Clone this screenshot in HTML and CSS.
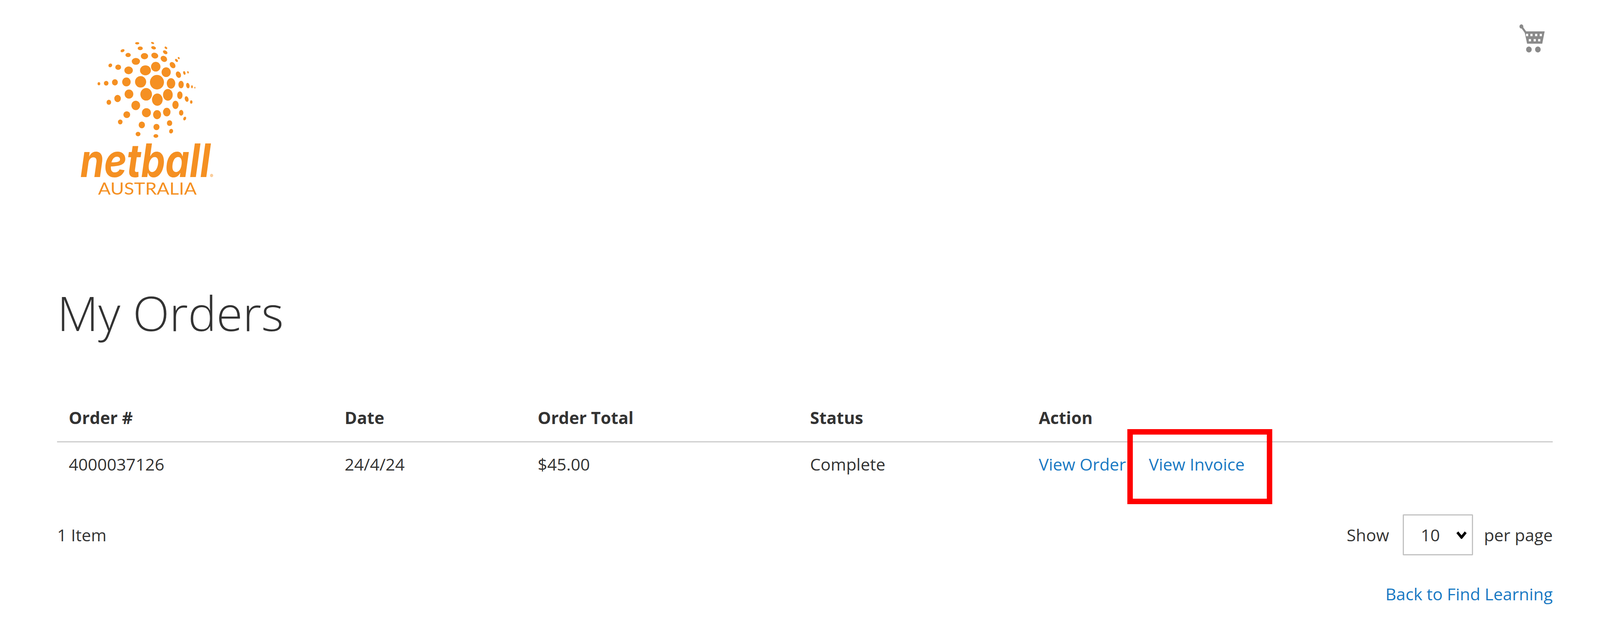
FILE: index.html
```html
<!DOCTYPE html>
<html lang="en">
<head>
  <meta charset="UTF-8">
  <title>My Orders</title>
  <link rel="stylesheet" href="styles.css">
</head>
<body>
<header class="site-header">
  <a class="logo" href="#">
    <svg class="logo-svg" viewBox="0 0 1500 1440" preserveAspectRatio="none" fill="#f59022">
      <ellipse cx="681" cy="152" rx="17" ry="9"/>
      <ellipse cx="808" cy="150" rx="13" ry="7" transform="rotate(20 808 150)"/>
      <ellipse cx="706" cy="191" rx="21" ry="14"/>
      <ellipse cx="816" cy="187" rx="20" ry="12" transform="rotate(15 816 187)"/>
      <ellipse cx="918" cy="187" rx="12" ry="8" transform="rotate(35 918 187)"/>
      <ellipse cx="560" cy="209" rx="17" ry="11" transform="rotate(-20 560 209)"/>
      <ellipse cx="912" cy="221" rx="20" ry="13" transform="rotate(30 912 221)"/>
      <ellipse cx="606" cy="242" rx="22" ry="16"/>
      <ellipse cx="741" cy="251" rx="30" ry="24"/>
      <ellipse cx="826" cy="247" rx="29" ry="22" transform="rotate(15 826 247)"/>
      <ellipse cx="901" cy="272" rx="28" ry="22" transform="rotate(30 901 272)"/>
      <ellipse cx="1005" cy="284" rx="14" ry="9" transform="rotate(45 1005 284)"/>
      <ellipse cx="1024" cy="266" rx="9" ry="7" transform="rotate(45 1024 266)"/>
      <ellipse cx="670" cy="291" rx="34" ry="26"/>
      <ellipse cx="973" cy="320" rx="27" ry="20" transform="rotate(45 973 320)"/>
      <ellipse cx="459" cy="322" rx="16" ry="14" transform="rotate(-30 459 322)"/>
      <ellipse cx="524" cy="336" rx="24" ry="20"/>
      <ellipse cx="610" cy="360" rx="35" ry="30"/>
      <ellipse cx="749" cy="360" rx="45" ry="38"/>
      <ellipse cx="834" cy="332" rx="39" ry="37"/>
      <ellipse cx="920" cy="374" rx="38" ry="37"/>
      <ellipse cx="1021" cy="393" rx="26" ry="20" transform="rotate(60 1021 393)"/>
      <ellipse cx="1070" cy="380" rx="14" ry="9" transform="rotate(70 1070 380)"/>
      <ellipse cx="1100" cy="375" rx="9" ry="6" transform="rotate(70 1100 375)"/>
      <ellipse cx="365" cy="463" rx="11" ry="12"/>
      <ellipse cx="425" cy="459" rx="19" ry="18"/>
      <ellipse cx="497" cy="452" rx="24" ry="24"/>
      <ellipse cx="592" cy="449" rx="35" ry="34"/>
      <ellipse cx="709" cy="448" rx="46" ry="44"/>
      <ellipse cx="844" cy="451" rx="58" ry="56"/>
      <ellipse cx="960" cy="460" rx="35" ry="40"/>
      <ellipse cx="1043" cy="469" rx="22" ry="29"/>
      <ellipse cx="1099" cy="477" rx="14" ry="21" transform="rotate(-15 1099 477)"/>
      <ellipse cx="1133" cy="486" rx="7" ry="11"/>
      <ellipse cx="1157" cy="493" rx="4" ry="7"/>
      <ellipse cx="613" cy="542" rx="36" ry="35"/>
      <ellipse cx="755" cy="544" rx="48" ry="48"/>
      <ellipse cx="847" cy="585" rx="44" ry="47"/>
      <ellipse cx="934" cy="548" rx="40" ry="45"/>
      <ellipse cx="1033" cy="551" rx="22" ry="30"/>
      <ellipse cx="1089" cy="580" rx="15" ry="22" transform="rotate(-20 1089 580)"/>
      <ellipse cx="1127" cy="603" rx="10" ry="13"/>
      <ellipse cx="519" cy="576" rx="27" ry="28"/>
      <ellipse cx="447" cy="605" rx="19" ry="19"/>
      <ellipse cx="669" cy="629" rx="36" ry="36"/>
      <ellipse cx="997" cy="625" rx="26" ry="32"/>
      <ellipse cx="595" cy="700" rx="28" ry="26"/>
      <ellipse cx="757" cy="685" rx="37" ry="35"/>
      <ellipse cx="845" cy="700" rx="33" ry="35"/>
      <ellipse cx="925" cy="680" rx="31" ry="33"/>
      <ellipse cx="1044" cy="686" rx="18" ry="22"/>
      <ellipse cx="1073" cy="730" rx="11" ry="15" transform="rotate(30 1073 730)"/>
      <ellipse cx="541" cy="756" rx="19" ry="19"/>
      <ellipse cx="719" cy="779" rx="26" ry="26"/>
      <ellipse cx="840" cy="795" rx="25" ry="24"/>
      <ellipse cx="948" cy="765" rx="22" ry="22"/>
      <ellipse cx="961" cy="827" rx="16" ry="18" transform="rotate(30 961 827)"/>
      <ellipse cx="688" cy="849" rx="20" ry="17"/>
      <ellipse cx="835" cy="864" rx="20" ry="14"/>
      <text class="logo-name" x="210" y="1178" textLength="1075" lengthAdjust="spacingAndGlyphs">netball</text>
      <circle cx="1295" cy="1167" r="13" opacity="0.45"/>
      <text class="logo-sub" x="358" y="1315" textLength="814" lengthAdjust="spacingAndGlyphs">AUSTRALIA</text>
    </svg>
  </a>
  <a class="cart" href="#">
    <svg viewBox="225 95 225 220" preserveAspectRatio="none" fill="#8a8a8a">
      <path d="M250 112 L285 158" stroke="#8a8a8a" stroke-width="16" fill="none"/>
      <circle cx="250" cy="112" r="16"/>
      <path d="M275 150 H442 L422 245 H297 Z"/>
      <g fill="#fff">
        <rect x="288" y="169" width="18" height="18"/>
        <rect x="324" y="169" width="18" height="18"/>
        <rect x="363" y="169" width="18" height="18"/>
        <rect x="401" y="169" width="18" height="18"/>
        <rect x="311" y="209" width="18" height="18"/>
        <rect x="351" y="209" width="18" height="18"/>
        <rect x="388" y="209" width="18" height="18"/>
      </g>
      <circle cx="312" cy="290" r="23"/>
      <circle cx="386" cy="290" r="23"/>
    </svg>
  </a>
</header>

<main class="content">
  <h1 class="page-title">My Orders</h1>

  <table class="orders">
    <colgroup>
      <col class="col-id">
      <col class="col-date">
      <col class="col-total">
      <col class="col-status">
      <col>
    </colgroup>
    <thead>
      <tr>
        <th>Order #</th>
        <th>Date</th>
        <th>Order Total</th>
        <th>Status</th>
        <th>Action</th>
      </tr>
    </thead>
    <tbody>
      <tr>
        <td>4000037126</td>
        <td>24/4/24</td>
        <td>$45.00</td>
        <td>Complete</td>
        <td class="actions">
          <a href="#">View Order</a>
          <a class="invoice" href="#">View Invoice<span class="highlight"></span></a>
        </td>
      </tr>
    </tbody>
  </table>

  <div class="toolbar">
    <span>1 Item</span>
    <div class="limiter">
      <span class="limit-show">Show</span>
      <select class="limit-select">
        <option>10</option>
        <option>20</option>
        <option>50</option>
      </select>
      <span>per page</span>
    </div>
  </div>

  <div class="back">
    <a href="#">Back to Find Learning</a>
  </div>
</main>
</body>
</html>
```

FILE: styles.css
```css
html,
body {
  margin: 0;
  padding: 0;
  background: #fff;
}

body {
  font-family: "Open Sans", "Liberation Sans", sans-serif;
  font-size: 1.045vw;
  color: #333;
}

a {
  color: #1979c3;
  text-decoration: none;
}

/* header */
.site-header {
  display: flex;
  justify-content: space-between;
  align-items: flex-start;
  padding: 60px 3.41vw 0 3.41vw;
  height: 480px;
}

.logo {
  display: block;
  width: 11.36vw;
  height: 480px;
}

.logo-svg {
  display: block;
  width: 100%;
  height: 100%;
  filter: blur(0.7px);
}

.logo-name {
  font-family: "Inter", sans-serif;
  font-weight: 700;
  font-style: italic;
  font-size: 353px;
}

.logo-sub {
  font-family: "Lato", sans-serif;
  font-weight: 400;
  font-size: 130px;
}

.cart {
  display: block;
  width: 1.705vw;
  height: 73px;
  margin-top: 2px;
}

.cart svg {
  display: block;
  width: 100%;
  height: 100%;
  filter: blur(0.6px);
}

/* content */
.content {
  padding: 0 2.955vw 0 3.568vw;
}

.page-title {
  margin: 0;
  padding-top: 170px;
  font-size: 2.99vw;
  font-weight: 300;
  line-height: 180px;
}

.orders {
  width: 100%;
  margin-top: 139px;
  border-collapse: collapse;
  table-layout: fixed;
}

.col-id {
  width: 18.45%;
}

.col-date {
  width: 12.91%;
}

.col-total {
  width: 18.21%;
}

.col-status {
  width: 15.29%;
}

.orders th,
.orders td {
  padding: 0 0 0 0.727vw;
  text-align: left;
  white-space: nowrap;
}

.orders th {
  height: 78px;
  padding-bottom: 22px;
  font-weight: 700;
  border-bottom: 3px solid #ccc;
}

.orders td {
  height: 110px;
  font-weight: 400;
}

.actions a {
  margin-right: 1.16vw;
}

.invoice {
  position: relative;
}

/* red annotation box */
.highlight {
  position: absolute;
  left: -1.34vw;
  right: -1.727vw;
  top: -60px;
  height: 192px;
  border: 14px solid #f00;
  box-sizing: border-box;
}

.toolbar {
  display: flex;
  justify-content: space-between;
  align-items: center;
  margin-top: 74px;
}

.limiter {
  display: flex;
  align-items: center;
  gap: 0.68vw;
}

.limit-show {
  margin-right: 0.18vw;
}

.limit-select {
  appearance: none;
  width: 4.386vw;
  height: 105px;
  padding: 0 0 0 1.045vw;
  font-family: "Open Sans", "Liberation Sans", sans-serif;
  font-size: 1.045vw;
  color: #333;
  background: #fff url("data:image/svg+xml,%3Csvg xmlns='http://www.w3.org/2000/svg' viewBox='0 0 29 20' preserveAspectRatio='none'%3E%3Cpath d='M3 3 L14.5 16 L26 3' fill='none' stroke='%23000' stroke-width='7'/%3E%3C/svg%3E") no-repeat right 0.33vw center / 0.66vw 20px;
  border: 3px solid #c2c2c2;
  border-radius: 2px;
}

.back {
  margin-top: 69px;
  text-align: right;
}
```
